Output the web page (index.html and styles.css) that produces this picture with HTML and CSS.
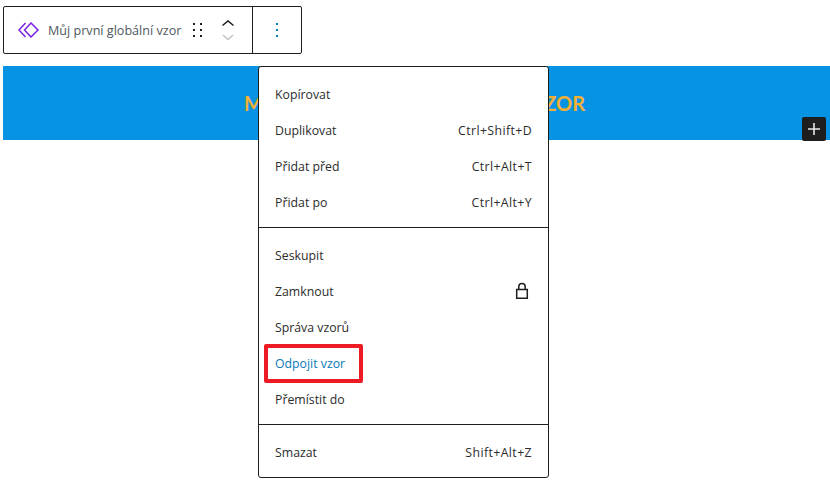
FILE: index.html
```html
<!DOCTYPE html>
<html lang="cs">

<head>
  <meta charset="UTF-8" />
  <title>Odpojit vzor</title>
  <link rel="stylesheet" href="styles.css">
</head>

<body>
  <div class="toolbar">
    <div class="toolbar-main">
      <svg class="pattern-icon" width="21" height="16" viewBox="0 0 21 16">
        <path d="M7.500 1 1 8l6.500 7M13 1 6.500 8l6.500 7 7-7z" fill="none" stroke="#7a1fe0" stroke-width="1.500" />
      </svg>
      <span class="block-name">Můj první globální vzor</span>
      <svg class="drag-icon" width="10" height="16" viewBox="0 0 10 16">
        <path d="M1 1h2v2H1zM8 1h2v2H8zM1 7h2v2H1zM8 7h2v2H8zM1 13h2v2H1zM8 13h2v2H8z" fill="#1e1e1e" />
      </svg>
      <div class="movers">
        <svg width="14" height="10" viewBox="0 0 14 10">
          <path d="M1.500 7.500 7 3l5.500 4.500" fill="none" stroke="#1e1e1e" stroke-width="1.500" />
        </svg>
        <svg width="14" height="10" viewBox="0 0 14 10">
          <path d="M2 3l5 4.500L12 3" fill="none" stroke="#c4c4c4" stroke-width="1.500" />
        </svg>
      </div>
    </div>
    <div class="toolbar-more">
      <svg width="4" height="16" viewBox="0 0 4 16">
        <path d="M1 1h2v2H1zM1 7h2v2H1zM1 13h2v2H1z" fill="#0a7ab8" />
      </svg>
    </div>
  </div>

  <div class="banner">
    <h2 class="banner-title">MŮJ PRVNÍ GLOBÁLNÍ VZOR</h2>
    <div class="add-btn">
      <svg width="14" height="14" viewBox="0 0 14 14">
        <path d="M6.200 1h1.600v5.200H13v1.600H7.800V13H6.200V7.800H1V6.200h5.200z" fill="#e8e8e8" />
      </svg>
    </div>
  </div>

  <div class="menu">
    <div class="menu-group">
      <div class="menu-item">Kopírovat</div>
      <div class="menu-item">Duplikovat <span class="shortcut">Ctrl+Shift+D</span></div>
      <div class="menu-item">Přidat před <span class="shortcut">Ctrl+Alt+T</span></div>
      <div class="menu-item">Přidat po <span class="shortcut">Ctrl+Alt+Y</span></div>
    </div>
    <div class="menu-group">
      <div class="menu-item">Seskupit</div>
      <div class="menu-item">Zamknout
        <svg class="lock-icon" width="14" height="18" viewBox="0 0 14 18">
          <path d="M1.700 7.500h10.600v8.800H1.700zM3.800 7.500V4.600a3.200 3.200 0 0 1 6.400 0v2.900" fill="none" stroke="#1e1e1e" stroke-width="1.500" />
        </svg>
      </div>
      <div class="menu-item">Správa vzorů</div>
      <div class="menu-item menu-item-active">Odpojit vzor<span class="highlight"></span></div>
      <div class="menu-item">Přemístit do</div>
    </div>
    <div class="menu-group">
      <div class="menu-item">Smazat <span class="shortcut">Shift+Alt+Z</span></div>
    </div>
  </div>
</body>

</html>
```

FILE: styles.css
```css
body {
  margin: 0;
  padding: 6px 3px 0;
  height: 480px;
  box-sizing: border-box;
  position: relative;
  background: #fff;
  font-family: "Open Sans", "Noto Sans", sans-serif;
  font-size: 12.3px;
  color: #2c2c2c;
  overflow: hidden;
}

.toolbar {
  display: flex;
  width: 299px;
  height: 48px;
  box-sizing: border-box;
  border: 1px solid #1e1e1e;
  border-radius: 2px;
}

.toolbar-main {
  display: flex;
  align-items: center;
  width: 249px;
  padding-left: 14px;
  box-sizing: border-box;
  border-right: 1px solid #1e1e1e;
}

.block-name {
  width: 135px;
  margin-left: 9px;
  font-size: 12.6px;
  color: #50575e;
  white-space: nowrap;
}

.drag-icon {
  margin-left: 9px;
}

.movers {
  display: flex;
  flex-direction: column;
  margin-left: 19px;
  gap: 4px;
}

.toolbar-more {
  flex: 1;
  display: flex;
  align-items: center;
  justify-content: center;
}

.banner {
  position: relative;
  height: 74px;
  margin-top: 12px;
  margin-right: -3px;
  display: flex;
  align-items: center;
  justify-content: center;
  background: #0793e3;
}

.banner-title {
  margin: 0 0 0 -4px;
  width: 341px;
  font-family: "Lato", sans-serif;
  font-size: 20px;
  font-weight: 700;
  color: #f2b134;
  text-align: justify;
  text-align-last: justify;
}

.add-btn {
  position: absolute;
  right: 4px;
  bottom: -1px;
  width: 24px;
  height: 24px;
  display: flex;
  align-items: center;
  justify-content: center;
  background: #1e1e1e;
  border-radius: 2px;
}

.menu {
  position: absolute;
  left: 258px;
  top: 66px;
  width: 291px;
  box-sizing: border-box;
  background: #fff;
  border: 1px solid #1e1e1e;
  border-radius: 3px;
}

.menu-group {
  padding: 9px 0 7px;
}

.menu-group + .menu-group {
  border-top: 1px solid #1e1e1e;
}

.menu-item {
  position: relative;
  display: flex;
  align-items: center;
  justify-content: space-between;
  height: 36px;
  padding: 0 16px;
}

.shortcut {
  letter-spacing: 0.4px;
}

.lock-icon {
  margin-right: 3px;
}

.menu-item-active {
  color: #0a7ab8;
}

.highlight {
  position: absolute;
  left: 5px;
  top: -1px;
  width: 99px;
  height: 39px;
  box-sizing: border-box;
  border: 4px solid #ed1c24;
  border-radius: 2px;
}
```
